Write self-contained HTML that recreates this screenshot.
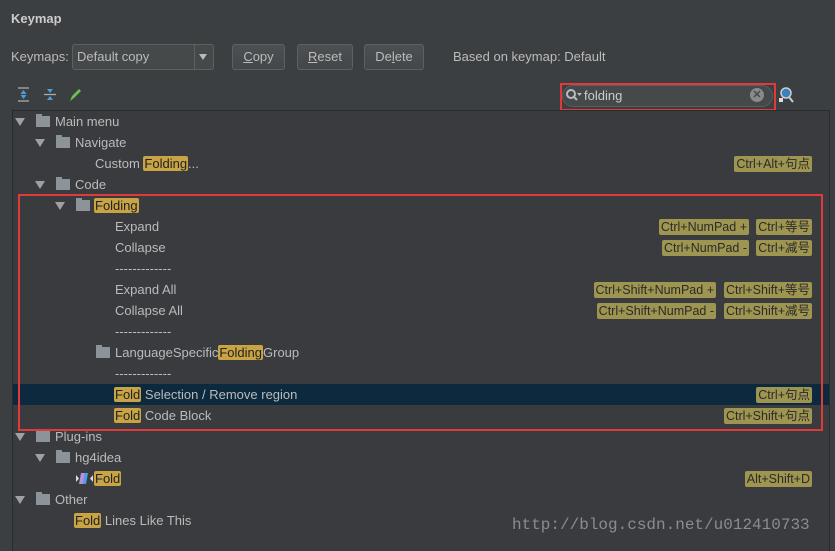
<!DOCTYPE html>
<html><head><meta charset="utf-8"><style>
body{margin:0;width:835px;height:546px;background:#3c3f41;font-family:"Liberation Sans","Noto Sans CJK SC",sans-serif;font-size:13px;color:#bbbbbb;position:relative;overflow:hidden}
.a{position:absolute;white-space:nowrap}
.btn{position:absolute;top:44px;height:24px;border:1px solid #5e6060;border-radius:3px;background:linear-gradient(#4c5052,#43474a);color:#bbb;line-height:24px;text-align:center}
.tree{position:absolute;left:12px;top:110px;width:816px;height:440px;background:#393b3e;border-left:1px solid #2b2b2b;border-top:1px solid #2b2b2b;border-right:1px solid #2b2b2b}
.r{position:absolute;left:0;width:816px;height:21px;line-height:21px}
.r span.t{position:absolute}
.tri{position:absolute;top:7px;width:0;height:0;border-left:5px solid transparent;border-right:5px solid transparent;border-top:8px solid #a0a0a0}
.fd{position:absolute;top:5px;width:14px;height:11px;background:#8c9399}
.fd:before{content:"";position:absolute;left:0;top:-2px;width:6px;height:2px;background:#8c9399}
.h{background:#c8a444;color:#222;border-radius:2px;padding:0 1px}
.k{position:absolute;top:3px;height:16px;line-height:16px;background:#9d9550;color:#2b2b2b;padding:0 2px;border-radius:2px;font-size:12.5px}
</style></head><body>
<div class="a" style="left:11px;top:11px;font-weight:bold;font-size:13px;color:#ccc">Keymap</div>
<div class="a" style="left:11px;top:49px">Keymaps:</div>
<div class="a" style="left:72px;top:44px;width:140px;height:24px;border:1px solid #5e6060;border-radius:3px;background:#45494a"><span style="position:absolute;left:4px;top:4px">Default copy</span><span style="position:absolute;left:121px;top:0;width:1px;height:24px;background:#5e6060"></span><span style="position:absolute;left:126px;top:9px;border-left:4px solid transparent;border-right:4px solid transparent;border-top:6px solid #bbb"></span></div>
<div class="btn" style="left:232px;width:51px"><u>C</u>opy</div>
<div class="btn" style="left:297px;width:54px"><u>R</u>eset</div>
<div class="btn" style="left:364px;width:58px">De<u>l</u>ete</div>
<div class="a" style="left:453px;top:49px">Based on keymap: Default</div>
<svg class="a" style="left:16px;top:86px" width="70" height="18"><g stroke="#aaa" stroke-width="1.3"><line x1="2" y1="2" x2="13" y2="2"/><line x1="2" y1="15" x2="13" y2="15"/><line x1="28" y1="8.5" x2="40" y2="8.5"/></g><path d="M7.5 4l-3 4h6zM7.5 13l-3-4h6z" fill="#4a9fe0"/><path d="M34 7l-3-4h6zM34 10l-3 4h6z" fill="#4a9fe0"/><path d="M54 15l2-5 7-7 2 2-7 7z" fill="#6ac04a"/></svg>
<div class="a" style="left:560px;top:83px;width:216px;height:28px;border:2px solid #e03a3a;box-sizing:border-box"></div>
<div class="a" style="left:562px;top:85px;width:211px;height:22px;border:1px solid #5a5d5f;border-radius:11px;background:#45494a;box-sizing:border-box"></div>
<svg class="a" style="left:565px;top:88px" width="20" height="16"><circle cx="6" cy="6" r="4" stroke="#bbb" stroke-width="2" fill="none"/><line x1="9" y1="9" x2="12" y2="12" stroke="#bbb" stroke-width="2"/><path d="M12 5h5l-2.5 3z" fill="#bbb"/></svg>
<div class="a" style="left:584px;top:88px;color:#ccc">folding</div>
<div class="a" style="left:750px;top:88px;width:14px;height:14px;border-radius:7px;background:#8a8a8a;color:#45494a;font-size:11px;line-height:14px;text-align:center;font-weight:bold">✕</div>
<svg class="a" style="left:777px;top:86px" width="18" height="18"><circle cx="9" cy="7" r="5" fill="#3a7fbf" stroke="#ccc" stroke-width="1.5"/><line x1="12" y1="11" x2="16" y2="16" stroke="#ccc" stroke-width="2"/><rect x="2" y="12" width="4" height="4" fill="#ddd"/></svg>
<div class="tree">
<div class="r" style="top:273px;background:#0d293e"></div>
<div class="r" style="top:0"><i class="tri" style="left:2px"></i><i class="fd" style="left:23px"></i><span class="t" style="left:42px">Main menu</span></div>
<div class="r" style="top:21px"><i class="tri" style="left:22px"></i><i class="fd" style="left:43px"></i><span class="t" style="left:62px">Navigate</span></div>
<div class="r" style="top:42px"><span class="t" style="left:82px">Custom <span class="h">Folding</span>...</span><span class="k" style="right:17px">Ctrl+Alt+句点</span></div>
<div class="r" style="top:63px"><i class="tri" style="left:22px"></i><i class="fd" style="left:43px"></i><span class="t" style="left:62px">Code</span></div>
<div class="r" style="top:84px"><i class="tri" style="left:42px"></i><i class="fd" style="left:63px"></i><span class="t" style="left:81px"><span class="h">Folding</span></span></div>
<div class="r" style="top:105px"><span class="t" style="left:102px">Expand</span><span class="k" style="right:80px">Ctrl+NumPad +</span><span class="k" style="right:17px">Ctrl+等号</span></div>
<div class="r" style="top:126px"><span class="t" style="left:102px">Collapse</span><span class="k" style="right:80px">Ctrl+NumPad -</span><span class="k" style="right:17px">Ctrl+减号</span></div>
<div class="r" style="top:147px"><span class="t" style="left:102px">-------------</span></div>
<div class="r" style="top:168px"><span class="t" style="left:102px">Expand All</span><span class="k" style="right:113px">Ctrl+Shift+NumPad +</span><span class="k" style="right:17px">Ctrl+Shift+等号</span></div>
<div class="r" style="top:189px"><span class="t" style="left:102px">Collapse All</span><span class="k" style="right:113px">Ctrl+Shift+NumPad -</span><span class="k" style="right:17px">Ctrl+Shift+减号</span></div>
<div class="r" style="top:210px"><span class="t" style="left:102px">-------------</span></div>
<div class="r" style="top:231px"><i class="fd" style="left:83px"></i><span class="t" style="left:102px">LanguageSpecific<span class="h">Folding</span>Group</span></div>
<div class="r" style="top:252px"><span class="t" style="left:102px">-------------</span></div>
<div class="r" style="top:273px"><span class="t" style="left:101px"><span class="h">Fold</span> Selection / Remove region</span><span class="k" style="right:17px">Ctrl+句点</span></div>
<div class="r" style="top:294px"><span class="t" style="left:101px"><span class="h">Fold</span> Code Block</span><span class="k" style="right:17px">Ctrl+Shift+句点</span></div>
<div class="r" style="top:315px"><i class="tri" style="left:2px"></i><i class="fd" style="left:23px"></i><span class="t" style="left:42px">Plug-ins</span></div>
<div class="r" style="top:336px"><i class="tri" style="left:22px"></i><i class="fd" style="left:43px"></i><span class="t" style="left:62px">hg4idea</span></div>
<div class="r" style="top:357px"><svg style="position:absolute;left:63px;top:4px" width="18" height="13"><path d="M0 3l3 3.5-3 3.5z" fill="#ddd"/><path d="M5 1h4l-2 11h-4z" fill="#b590e0"/><path d="M9 1h3l-2 11h-3z" fill="#4aa0e0"/><path d="M17 3l-3 3.5 3 3.5z" fill="#ddd"/></svg><span class="t" style="left:81px"><span class="h">Fold</span></span><span class="k" style="right:17px">Alt+Shift+D</span></div>
<div class="r" style="top:378px"><i class="tri" style="left:2px"></i><i class="fd" style="left:23px"></i><span class="t" style="left:42px">Other</span></div>
<div class="r" style="top:399px"><span class="t" style="left:61px"><span class="h">Fold</span> Lines Like This</span></div>
</div>
<div class="a" style="left:18px;top:194px;width:805px;height:237px;border:2px solid #e03a3a;box-sizing:border-box"></div>
<div class="a" style="left:512px;top:516px;font-family:'Liberation Mono',monospace;font-size:16px;color:#8a8c8e">http://blog.csdn.net/u012410733</div>
</body></html>
